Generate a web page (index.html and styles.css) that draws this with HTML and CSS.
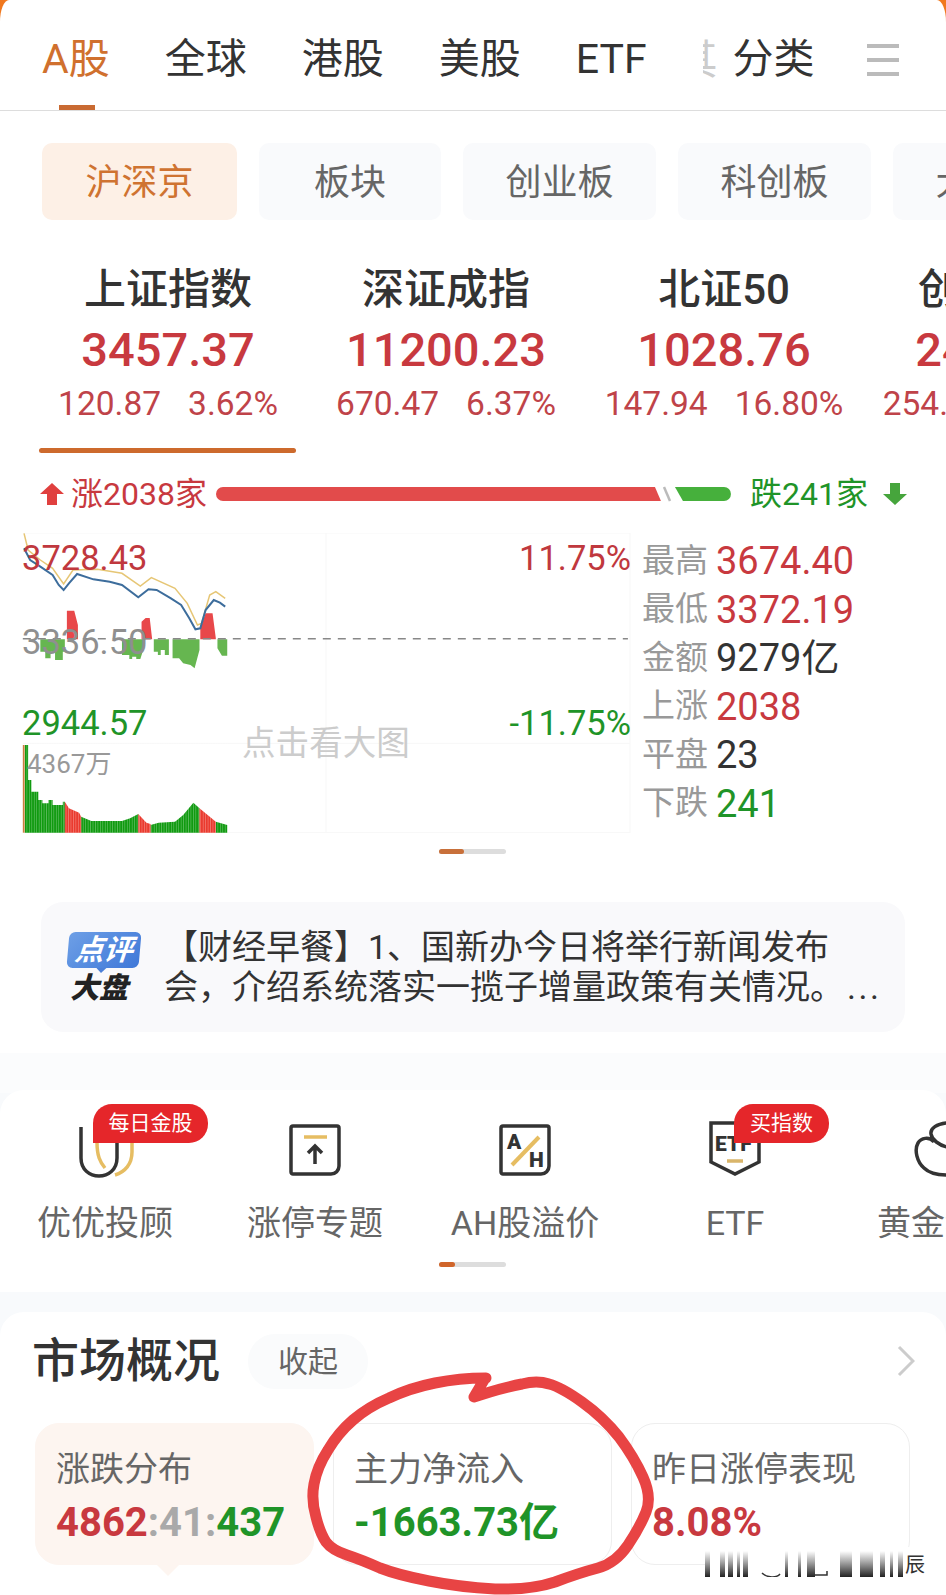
FILE: index.html
```html
<!DOCTYPE html>
<html lang="zh-CN">

<head>
    <meta charset="UTF-8">
    <title>行情</title>
    <link rel="stylesheet" href="styles.css">
</head>

<body>
    <div class="page">
        <div class="top">
            <div class="tabs">
                <span class="tab on">A股</span>
                <span class="tab">全球</span>
                <span class="tab">港股</span>
                <span class="tab">美股</span>
                <span class="tab">ETF</span>
                <span class="tab-cut">其</span>
                <span class="tab">分类</span>
                <div class="menu"><i></i><i></i><i></i></div>
            </div>

            <div class="chips">
                <span class="chip on">沪深京</span>
                <span class="chip small">板块</span>
                <span class="chip">创业板</span>
                <span class="chip">科创板</span>
                <span class="chip">大金融</span>
            </div>

            <div class="indexes">
                <div class="index">
                    <div class="index-name">上证指数</div>
                    <div class="index-num">3457.37</div>
                    <div class="index-sub"><span>120.87</span><span>3.62%</span></div>
                </div>
                <div class="index">
                    <div class="index-name">深证成指</div>
                    <div class="index-num">11200.23</div>
                    <div class="index-sub"><span>670.47</span><span>6.37%</span></div>
                </div>
                <div class="index">
                    <div class="index-name">北证50</div>
                    <div class="index-num">1028.76</div>
                    <div class="index-sub"><span>147.94</span><span>16.80%</span></div>
                </div>
                <div class="index">
                    <div class="index-name">创业板指</div>
                    <div class="index-num">2484.07</div>
                    <div class="index-sub"><span>254.10</span><span>11.38%</span></div>
                </div>
            </div>
            <div class="index-line"></div>

            <div class="updown">
                <svg class="arrow" width="24" height="22" viewBox="0 0 24 22"><path d="M12 0 24 11H17V22H7V11H0Z" fill="#e0403f"/></svg>
                <span class="up-text">涨2038家</span>
                <div class="bar">
                    <div class="bar-red"></div>
                    <svg class="bar-gap" width="14" height="16" viewBox="0 0 14 16"><path d="M3 1 9 15" stroke="#bbb" stroke-width="2.5"/></svg>
                    <div class="bar-green"></div>
                </div>
                <span class="down-text">跌241家</span>
                <svg class="arrow" width="24" height="22" viewBox="0 0 24 22"><path d="M12 22 24 11H17V0H7V11H0Z" fill="#46a53c"/></svg>
            </div>

            <div class="market">
                <div class="chart">
                    <svg class="chart-svg" width="610" height="300" viewBox="55 69 1495 900" preserveAspectRatio="none">
                        <defs>
                            <pattern id="stripe" width="6" height="10" patternUnits="userSpaceOnUse"><rect width="1.5" height="10" fill="#fff" opacity=".4"/></pattern>
                        </defs>
                        <path class="grid" d="M800 69V969M57 69H1545M57 700H1545M57 968H1545M1545 69V969"/>
                        <path d="M492 388V355L505 310H522L530 385V388ZM165 388V302H183L192 345V388ZM348 388V335L358 324H368L374 388Z" fill="#e8484a"/>
                        <path d="M60 388H100V425H112V445H125V425H136V450H155V425H160V388ZM300 388H352V420L345 447H335V440H325V447H318V435H300ZM378 388H415V435H405V420H395V435H388V425H378ZM424 388H490V420L478 475L468 465L450 460L440 445H424ZM534 388H558V437H545L534 415Z" fill="#66b650"/>
                        <path class="dash" d="M57 386H1540"/>
                        <polyline class="line-y" points="60,70 70,120 100,150 130,175 157,222 180,180 240,178 300,190 345,228 372,203 430,235 460,280 485,345 495,340 515,255 530,245 553,265"/>
                        <polyline class="line-b" points="60,115 75,150 100,170 130,195 145,225 157,240 170,220 190,192 230,208 270,215 300,225 340,262 365,238 385,240 420,265 445,285 465,325 480,358 492,355 505,300 525,270 540,278 553,290"/>
                        <path d="M62 968V705H70V810H78V845H95V870H105V880H120V870H130V885H155V875H160V968ZM200 968V920L225 933H300L320 925L340 912V968ZM370 968V945L390 938L430 935L450 915L475 878L490 895V968ZM530 968V935L558 945V968Z" fill="#109a10"/>
                        <path d="M160 968V875L170 895L195 908L200 920V968ZM340 968V912L360 938L370 942V968ZM490 968V895L510 915L530 935V968Z" fill="#ea3a2e"/>
                        <path d="M57 968V705H62V968Z" fill="#c9803f"/>
                        <rect x="57" y="700" width="502" height="268" fill="url(#stripe)"/>
                    </svg>
                    <span class="mark m-high">3728.43</span>
                    <span class="mark m-high-pct">11.75%</span>
                    <span class="mark m-mid">3336.50</span>
                    <span class="mark m-low">2944.57</span>
                    <span class="mark m-low-pct">-11.75%</span>
                    <span class="mark m-vol">4367万</span>
                    <span class="mark m-big">点击看大图</span>
                </div>
                <div class="stats">
                    <div class="stat"><span class="stat-k">最高</span><span class="stat-v red">3674.40</span></div>
                    <div class="stat"><span class="stat-k">最低</span><span class="stat-v red">3372.19</span></div>
                    <div class="stat"><span class="stat-k">金额</span><span class="stat-v">9279亿</span></div>
                    <div class="stat"><span class="stat-k">上涨</span><span class="stat-v red">2038</span></div>
                    <div class="stat"><span class="stat-k">平盘</span><span class="stat-v">23</span></div>
                    <div class="stat"><span class="stat-k">下跌</span><span class="stat-v green">241</span></div>
                </div>
            </div>
            <div class="pager first"><i></i></div>

            <div class="news">
                <div class="news-logo">
                    <div class="logo-blue">点评</div>
                    <div class="logo-dark">大盘</div>
                </div>
                <p class="news-text">【财经早餐】1、国新办今日将举行新闻发布<br>会，介绍系统落实一揽子增量政策有关情况。<span class="dots">...</span></p>
            </div>
        </div>

        <div class="lower">
            <div class="entry-card">
                <div class="entries">
                    <div class="entry">
                        <div class="entry-icon">
                            <svg class="icon" width="60" height="56" viewBox="0 0 60 56">
                                <path d="M22 22C22 36 25 42 30 48M57 22V32C57 44 50 52 40 55" fill="none" stroke="#e6bd62" stroke-width="3.5"/>
                                <path d="M6 7V38C6 62 42 62 42 38V22" fill="none" stroke="#333" stroke-width="3.5"/>
                            </svg>
                            <span class="badge long">每日金股</span>
                        </div>
                        <div class="entry-name">优优投顾</div>
                    </div>
                    <div class="entry">
                        <div class="entry-icon">
                            <svg class="icon" width="52" height="52" viewBox="0 0 52 52">
                                <path d="M4 2H48A2 2 0 0 1 50 4V42A8 8 0 0 1 42 50H4A2 2 0 0 1 2 48V4A2 2 0 0 1 4 2Z" fill="none" stroke="#333" stroke-width="3.5"/>
                                <path d="M15 13H38" stroke="#e6bd62" stroke-width="3.5"/>
                                <path d="M26 40V23M19 29 26 22 33 29" fill="none" stroke="#333" stroke-width="3.5"/>
                            </svg>
                        </div>
                        <div class="entry-name">涨停专题</div>
                    </div>
                    <div class="entry">
                        <div class="entry-icon">
                            <svg class="icon" width="52" height="52" viewBox="0 0 52 52">
                                <path d="M4 2H48A2 2 0 0 1 50 4V42A8 8 0 0 1 42 50H4A2 2 0 0 1 2 48V4A2 2 0 0 1 4 2Z" fill="none" stroke="#333" stroke-width="3.5"/>
                                <path d="M13 41 40 13" stroke="#e6bd62" stroke-width="4"/>
                                <text class="icon-text" x="8" y="25">A</text>
                                <text class="icon-text" x="30" y="43">H</text>
                            </svg>
                        </div>
                        <div class="entry-name">AH股溢价</div>
                    </div>
                    <div class="entry">
                        <div class="entry-icon">
                            <svg class="icon" width="52" height="56" viewBox="0 0 52 56">
                                <path d="M2 3H50V42L26 54 2 42Z" fill="none" stroke="#333" stroke-width="3.5"/>
                                <path d="M18 41H34" stroke="#d9b56a" stroke-width="3.5"/>
                                <text class="icon-text" x="6" y="31">ETF</text>
                            </svg>
                            <span class="badge short">买指数</span>
                        </div>
                        <div class="entry-name">ETF</div>
                    </div>
                    <div class="entry">
                        <div class="entry-icon">
                            <svg class="icon" width="60" height="56" viewBox="0 0 60 56">
                                <path d="M32 3C22 4 15 8 16 14C17 20 24 25 32 27M19 22C14 16 6 18 3 23C-1 30 2 42 9 48C14 53 24 55 32 55" fill="none" stroke="#333" stroke-width="3.5"/>
                            </svg>
                        </div>
                        <div class="entry-name">黄金频道</div>
                    </div>
                </div>
                <div class="pager second"><i></i></div>
            </div>

            <div class="overview">
                <div class="ov-head">
                    <h2 class="ov-title">市场概况</h2>
                    <span class="ov-fold">收起</span>
                    <svg class="ov-more" width="18" height="32" viewBox="0 0 18 32"><path d="M2 2 16 16 2 30" fill="none" stroke="#ccc" stroke-width="3"/></svg>
                </div>
                <div class="ov-cards">
                    <div class="ov-card on">
                        <div class="ov-name">涨跌分布</div>
                        <div class="ov-val"><span class="red">4862</span><span class="gray">:41:</span><span class="green">437</span></div>
                    </div>
                    <div class="ov-card">
                        <div class="ov-name">主力净流入</div>
                        <div class="ov-val green">-1663.73亿</div>
                    </div>
                    <div class="ov-card">
                        <div class="ov-name">昨日涨停表现</div>
                        <div class="ov-val red">8.08%</div>
                    </div>
                </div>
            </div>
        </div>

        <svg class="scribble" width="946" height="1595" viewBox="0 0 946 1595">
            <path d="M486 1378Q459 1378 435 1383Q410 1388 389 1398Q368 1407 353 1420Q338 1433 328 1450Q317 1467 314 1484Q311 1500 316 1517Q320 1533 326 1542Q332 1550 347 1555Q362 1560 380 1568Q398 1575 429 1581Q459 1587 495 1589Q531 1590 555 1582Q579 1573 598 1568Q616 1563 628 1545Q640 1527 646 1512Q652 1497 643 1477Q634 1457 619 1437Q603 1417 582 1402Q561 1387 549 1384Q537 1380 522 1384Q507 1387 490 1392L474 1397L484 1380" fill="none" stroke="#e84444" stroke-width="11" stroke-linecap="round" stroke-linejoin="round"/>
        </svg>

        <!-- 水印被糊掉了，只剩竖条和最后一个字 -->
        <div class="stamp">
            <svg width="205" height="26" viewBox="0 0 205 26">
                <defs>
                    <linearGradient id="smear" x1="0" y1="0" x2="0" y2="1">
                        <stop offset="0" stop-color="#333" stop-opacity="0"/>
                        <stop offset="1" stop-color="#222"/>
                    </linearGradient>
                </defs>
                <path fill="url(#smear)" d="M0 0H5V26H0ZM15 0H20V26H15ZM23 0H28V26H23ZM32 0H35V26H32ZM38 0H43V26H38ZM80 0H83V26H80ZM93 0H96V26H93ZM102 0H110V26H102ZM135 0H147V26H135ZM155 0H168V26H155ZM175 0H180V26H175ZM185 0H188V26H185ZM193 0H198V26H193Z"/>
                <path d="M57 22C62 27 72 27 75 23M110 24H122V20" fill="none" stroke="#333" stroke-width="1.5"/>
            </svg>
            <span class="stamp-end">辰</span>
        </div>
    </div>
</body>

</html>
```

FILE: styles.css
```css
html, body {
    margin: 0;
    padding: 0;
}

body {
    width: 946px;
    height: 1595px;
    overflow: hidden;
    background: #fff;
    font-family: Roboto, "Noto Sans CJK SC", sans-serif;
}

.page {
    position: relative;
    width: 946px;
    height: 1595px;
    overflow: hidden;
    background: #f0781e;
}

.red { color: #c8393f; }
.green { color: #1f9428; }
.gray { color: #a9a9a9; }

/* 顶部 */
.top {
    height: 1053px;
    background: #fff;
    border-radius: 9px 9px 0 0 / 22px 22px 0 0;
    overflow: hidden;
}

.tabs {
    display: flex;
    align-items: center;
    height: 111px;
    padding: 10px 0 0 42px;
    box-sizing: border-box;
    border-bottom: 1px solid #ddd;
    font-size: 41px;
    color: #333;
}

.tab {
    position: relative;
    margin-right: 55px;
    line-height: 50px;
    padding-bottom: 2px;
}

.tab.on {
    color: #d0702e;
}

.tab.on::after {
    content: "";
    position: absolute;
    left: 17px;
    bottom: -24px;
    width: 36px;
    height: 5px;
    background: #c96a32;
}

.tab-cut {
    width: 15px;
    margin-left: 1px;
    margin-right: 15px;
    overflow: hidden;
    color: #ccc;
    line-height: 50px;
    text-indent: -26px;
    white-space: nowrap;
}

.menu {
    display: flex;
    flex-direction: column;
    gap: 10px;
    margin-left: -3px;
}

.menu i {
    display: block;
    width: 32px;
    height: 4px;
    background: #bbb;
}

.chips {
    display: flex;
    gap: 22px;
    padding: 32px 0 0 42px;
    overflow: hidden;
}

.chip {
    flex: none;
    width: 193px;
    height: 77px;
    line-height: 80px;
    text-align: center;
    font-size: 36px;
    color: #666;
    background: #f9fafc;
    border-radius: 10px;
}

.chip.small {
    width: 182px;
}

.chip.on {
    width: 195px;
    color: #cf7331;
    background: #fdf0e6;
}

/* 指数 */
.indexes {
    display: flex;
    padding: 45px 0 0 29px;
}

.index {
    flex: none;
    width: 278px;
    text-align: center;
}

.index-name {
    font-size: 42px;
    font-weight: 500;
    line-height: 50px;
    color: #333;
}

.index-num {
    font-size: 47px;
    font-weight: 500;
    line-height: 56px;
    margin-top: 7px;
    color: #c8393f;
}

.index-sub {
    display: flex;
    justify-content: center;
    gap: 27px;
    font-size: 33.5px;
    line-height: 40px;
    margin-top: 6px;
    color: #bf4349;
}

.index-line {
    width: 257px;
    height: 5px;
    margin: 24px 0 0 39px;
    border-radius: 3px;
    background: #cd6a2d;
}

/* 涨跌条 */
.updown {
    display: flex;
    align-items: center;
    height: 30px;
    margin-top: 26px;
    padding-left: 40px;
}

.up-text, .down-text {
    font-size: 32px;
    line-height: 30px;
    white-space: nowrap;
}

.up-text {
    margin-left: 7px;
    color: #c8393f;
}

.down-text {
    margin-right: 15px;
    color: #1f9428;
}

.bar {
    display: flex;
    align-items: center;
    width: 515px;
    margin: 0 19px 0 9px;
}

.bar-red {
    width: 445px;
    height: 14px;
    border-radius: 7px 0 0 7px;
    background: #e24b4b;
    clip-path: polygon(0 0, calc(100% - 6px) 0, 100% 100%, 0 100%);
}

.bar-gap {
    flex: none;
}

.bar-green {
    width: 56px;
    height: 14px;
    border-radius: 0 7px 7px 0;
    background: #46b03c;
    clip-path: polygon(0 0, 100% 0, 100% 100%, 8px 100%);
}

/* 分时图 */
.market {
    display: flex;
    margin-top: 24px;
    padding-left: 22px;
}

.chart {
    position: relative;
    flex: none;
    width: 610px;
    height: 300px;
}

.chart-svg {
    display: block;
}

.grid {
    fill: none;
    stroke: #f7f7f7;
    stroke-width: 1;
    vector-effect: non-scaling-stroke;
}

.dash {
    fill: none;
    stroke: #888;
    stroke-width: 1.5;
    stroke-dasharray: 8 7;
    vector-effect: non-scaling-stroke;
}

.line-y, .line-b {
    fill: none;
    vector-effect: non-scaling-stroke;
}

.line-y {
    stroke: #e6c675;
    stroke-width: 1.5;
}

.line-b {
    stroke: #3d6d9c;
    stroke-width: 2;
}

.mark {
    position: absolute;
    font-size: 34.5px;
    line-height: 36px;
    white-space: nowrap;
}

.m-high { left: 0; top: 7px; color: #c0383e; }
.m-high-pct { right: 1px; top: 7px; color: #c0383e; }
.m-mid { left: 0; top: 91px; color: #8f8f8f; }
.m-low { left: 0; top: 172px; color: #1f9428; }
.m-low-pct { right: 1px; top: 172px; color: #1f9428; }
.m-vol { left: 5px; top: 216px; font-size: 26px; line-height: 30px; color: #999; }
.m-big { left: 220px; top: 187px; font-size: 33.6px; line-height: 48px; color: #ccc; }

.stats {
    display: flex;
    flex-direction: column;
    margin-left: 11px;
    padding-top: 4px;
}

.stat {
    display: flex;
    align-items: center;
    gap: 8px;
    height: 48.5px;
}

.stat-k {
    font-size: 33px;
    line-height: 40px;
    margin-left: -1px;
    margin-top: -1px;
    color: #999;
}

.stat-v {
    font-size: 38px;
    line-height: 44px;
    color: #333;
}

.stat-v.red { color: #c8393f; }
.stat-v.green { color: #1f9428; }

.pager {
    width: 67px;
    height: 5px;
    border-radius: 3px;
    background: #ddd;
}

.pager i {
    display: block;
    height: 5px;
    border-radius: 3px;
    background: #c8703a;
}

.pager.first {
    margin: 16px 0 0 439px;
}

.pager.first i { width: 25px; }

.pager.second {
    margin: 15px 0 0 439px;
}

.pager.second i { width: 16px; background: #d0652a; }

/* 早餐 */
.news {
    display: flex;
    align-items: center;
    width: 864px;
    height: 130px;
    margin: 48px 0 0 41px;
    border-radius: 22px;
    background: #f9f9fb;
}

.news-logo {
    flex: none;
    width: 72px;
    margin-left: 27px;
}

.logo-blue {
    position: relative;
    height: 36px;
    line-height: 36px;
    text-align: center;
    font-size: 29px;
    font-weight: 700;
    font-style: italic;
    color: #fff;
    border-radius: 6px;
    background: linear-gradient(135deg, #6d9fe6, #3f78d8);
    transform: skewX(-5deg);
}

.logo-blue::after {
    content: "";
    position: absolute;
    left: 30px;
    bottom: -5px;
    border-top: 5px solid #4c80d8;
    border-left: 5px solid transparent;
    border-right: 5px solid transparent;
}

.logo-dark {
    margin-top: 6px;
    padding-right: 10px;
    text-align: center;
    font-size: 29px;
    font-weight: 900;
    font-style: italic;
    line-height: 28px;
    color: #222;
}

.news-text {
    margin: 0 0 0 24px;
    font-size: 34px;
    line-height: 40px;
    color: #333;
    white-space: nowrap;
}

.dots {
    margin-left: 3px;
    letter-spacing: 2.5px;
}

/* 入口 */
.lower {
    padding-top: 37px;
    background: linear-gradient(#fbfcfd 40px, #f8fafc 40px);
}

.entry-card {
    height: 202px;
    padding-top: 1px;
    box-sizing: border-box;
    margin-bottom: 20px;
    background: #fff;
    border-radius: 24px 24px 0 0;
}

.entries {
    display: flex;
    padding-top: 29px;
}

.entry {
    flex: none;
    width: 210px;
    text-align: center;
}

.entry-icon {
    position: relative;
    display: flex;
    justify-content: center;
    align-items: flex-end;
    height: 56px;
}

.icon {
    overflow: visible;
}

.entry-name {
    margin-top: 23px;
    font-size: 34px;
    line-height: 48px;
    color: #666;
    white-space: nowrap;
}

.icon-text {
    font-size: 21px;
    font-weight: 900;
    fill: #333;
}

.badge {
    position: absolute;
    top: -16px;
    height: 39px;
    line-height: 39px;
    text-align: center;
    font-size: 21px;
    color: #fff;
    background: #e5262a;
    border-radius: 19px 19px 19px 0;
}

.badge.long {
    left: 93px;
    width: 115px;
}

.badge.short {
    left: 104px;
    width: 95px;
}

/* 市场概况 */
.overview {
    height: 283px;
    padding: 0 35px;
    box-sizing: border-box;
    background: #fff;
    border-radius: 24px 24px 0 0;
}

.ov-head {
    display: flex;
    align-items: center;
    height: 98px;
}

.ov-title {
    margin: 0 0 0 -3px;
    font-size: 47px;
    font-weight: 500;
    line-height: 60px;
    color: #333;
}

.ov-fold {
    margin-left: 28px;
    padding: 0 30px;
    height: 55px;
    line-height: 55px;
    font-size: 30px;
    color: #666;
    background: #fafbfc;
    border-radius: 27px;
}

.ov-more {
    margin-left: auto;
    margin-right: -4px;
}

.ov-cards {
    display: flex;
    gap: 19px;
    margin-top: 13px;
}

.ov-card {
    position: relative;
    flex: none;
    width: 279px;
    height: 142px;
    box-sizing: border-box;
    padding: 24px 20px;
    border: 1px solid #eee;
    border-radius: 24px;
    background: #fff;
}

.ov-card.on {
    border-color: #fdf5f0;
    background: #fdf5f0;
}

.ov-card.on::after {
    content: "";
    position: absolute;
    left: 120px;
    bottom: -12px;
    border-top: 12px solid #fdf5f0;
    border-left: 12px solid transparent;
    border-right: 12px solid transparent;
}

.ov-name {
    font-size: 34px;
    line-height: 42px;
    color: #666;
}

.ov-val {
    margin-top: 8px;
    font-size: 40px;
    font-weight: 700;
    line-height: 50px;
}

/* 画上去的红圈和水印 */
.scribble {
    position: absolute;
    left: 0;
    top: 0;
    pointer-events: none;
}

.stamp {
    position: absolute;
    left: 705px;
    top: 1547px;
    display: flex;
    align-items: flex-end;
    width: 221px;
    height: 30px;
    background: #fff;
}

.stamp-end {
    margin-left: -5px;
    font-size: 20px;
    line-height: 24px;
    color: #333;
}
```
